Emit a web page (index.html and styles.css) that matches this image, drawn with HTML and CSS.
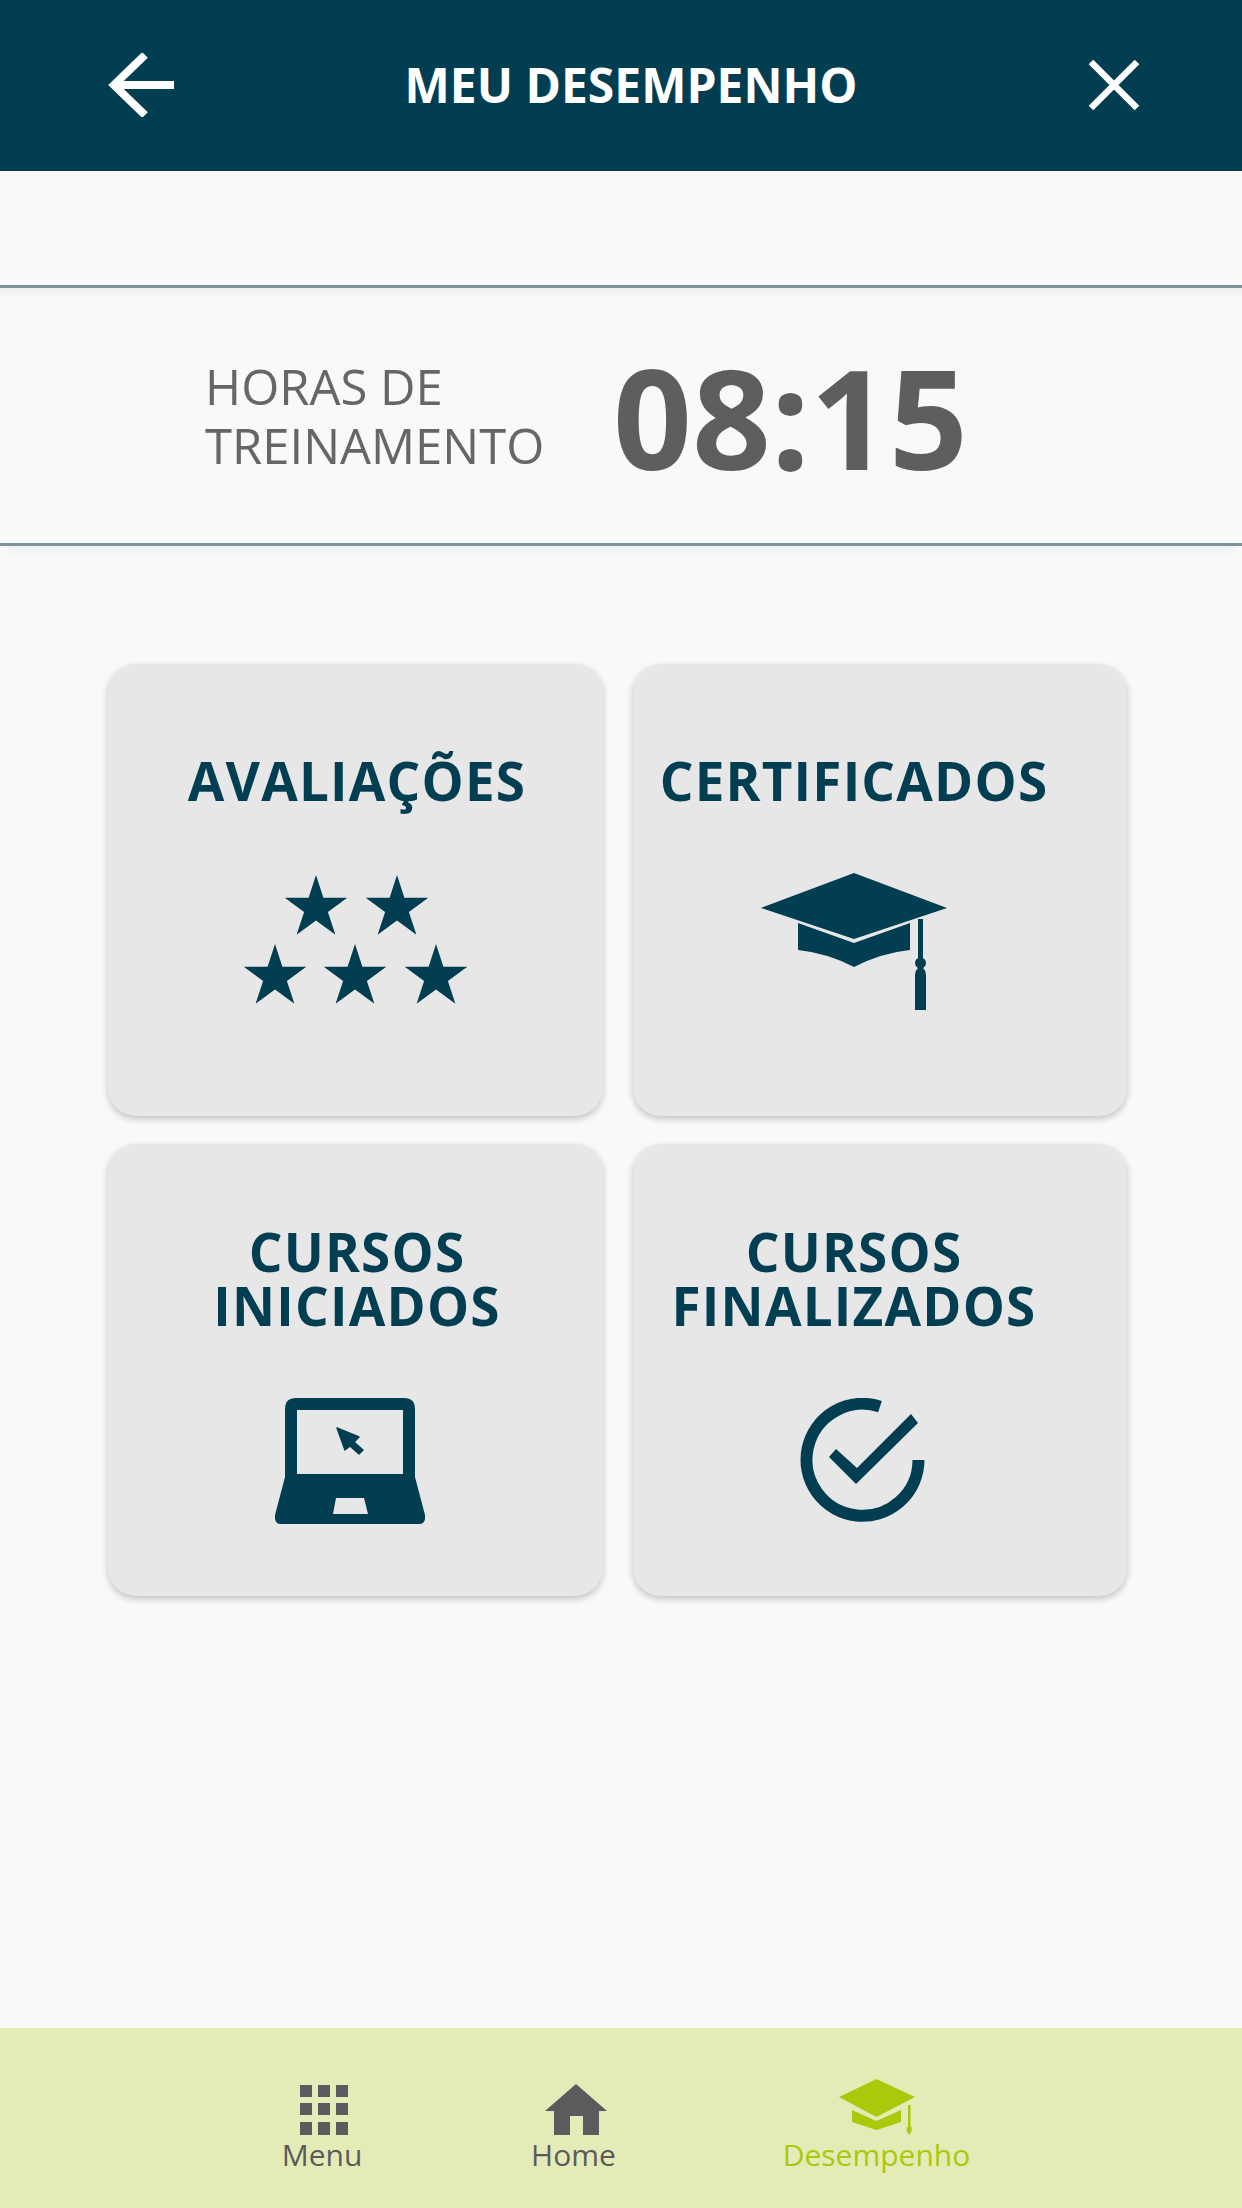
FILE: index.html
```html
<!DOCTYPE html>
<html lang="pt">
<head>
  <meta charset="UTF-8">
  <title>Meu Desempenho</title>
  <link rel="stylesheet" href="styles.css">
</head>

<body>
  <div class="app">

    <header class="top_bar">
      <svg class="back_icon" viewBox="0 0 66 64">
        <path d="M37 2 L6 32 L37 62" fill="none" stroke="#fff" stroke-width="8"/>
        <rect x="8" y="28" width="58" height="8" fill="#fff"/>
      </svg>
      <h1 class="top_title">MEU DESEMPENHO</h1>
      <svg class="close_icon" viewBox="0 0 52 52">
        <path d="M3 3 L49 49 M49 3 L3 49" fill="none" stroke="#fff" stroke-width="6.5"/>
      </svg>
    </header>

    <section class="hours">
      <div class="hours_label">HORAS DE<br>TREINAMENTO</div>
      <div class="hours_value">08:15</div>
    </section>

    <main class="cards">

      <div class="card card_left">
        <div class="card_title">AVALIAÇÕES</div>
        <svg class="stars_icon" viewBox="0 0 224 129">
          <defs>
            <polygon id="star" points="0,-33 7.4,-10.2 31.3,-10.2 11.9,3.9 19.4,26.7 0,12.6 -19.4,26.7 -11.9,3.9 -31.3,-10.2 -7.4,-10.2"/>
          </defs>
          <g fill="#023e52">
            <use href="#star" x="73" y="33"/>
            <use href="#star" x="154" y="33"/>
            <use href="#star" x="32" y="102"/>
            <use href="#star" x="112" y="102"/>
            <use href="#star" x="193" y="102"/>
          </g>
        </svg>
      </div>

      <div class="card card_right">
        <div class="card_title">CERTIFICADOS</div>
        <svg class="cap_icon" viewBox="0 0 186 137">
          <g fill="#023e52">
            <polygon points="93,0 186,35 93,66 0,35"/>
            <path d="M37 50 L93 70 L149 50 V77 Q120 80 93 94 Q66 80 37 77 Z"/>
            <rect x="157" y="46" width="5" height="44"/>
            <circle cx="159.5" cy="90" r="5.5"/>
            <path d="M154 137 V102 Q154 96 159.5 94 Q165 96 165 102 V137 Z"/>
          </g>
        </svg>
      </div>

      <div class="card card_left">
        <div class="card_title card_title_two">CURSOS<br>INICIADOS</div>
        <svg class="laptop_icon" viewBox="0 0 150 126">
          <g fill="#023e52">
            <path fill-rule="evenodd" d="M21 0 H129 Q140 0 140 11 V79 L150 117 Q151 126 144 126 H6 Q-1 126 0 117 L10 79 V11 Q10 0 21 0 Z M22 12 V76 H128 V12 Z M61 100 L58 116 H93 L89 100 Z"/>
            <polygon points="62,30 84,39 79,44 88,52 84,56 75,48 70,52" stroke="#023e52" stroke-width="1.5" stroke-linejoin="round"/>
          </g>
        </svg>
      </div>

      <div class="card card_right">
        <div class="card_title card_title_two">CURSOS<br>FINALIZADOS</div>
        <svg class="check_icon" viewBox="0 0 125 124">
          <path d="M80 8.6 A56 56 0 1 0 118.5 62" fill="none" stroke="#023e52" stroke-width="12"/>
          <polygon points="36,51 29,59 56,86 118,25 111,16 57,70" fill="#023e52"/>
        </svg>
      </div>

    </main>

    <nav class="bottom_bar">
      <div class="nav_item">
        <svg class="nav_icon nav_icon_grid" width="48" height="51" viewBox="0 0 48 51">
          <g fill="#5b5b5d">
            <rect x="0" y="1" width="12" height="12"/><rect x="18" y="1" width="12" height="12"/><rect x="36" y="1" width="12" height="12"/>
            <rect x="0" y="19" width="12" height="12"/><rect x="18" y="19" width="12" height="12"/><rect x="36" y="19" width="12" height="12"/>
            <rect x="0" y="38" width="12" height="13"/><rect x="18" y="38" width="12" height="13"/><rect x="36" y="38" width="12" height="13"/>
          </g>
        </svg>
        <span>Menu</span>
      </div>
      <div class="nav_item">
        <svg class="nav_icon nav_icon_home" width="62" height="51" viewBox="0 0 62 51">
          <path fill="#5b5b5d" d="M31 0 L62 27 H54 V51 H38 V32 H25 V51 H9 V27 H0 Z"/>
        </svg>
        <span>Home</span>
      </div>
      <div class="nav_item nav_item_active">
        <svg class="nav_icon" width="76" height="56" viewBox="0 0 76 56">
          <g fill="#a9c90a">
            <polygon points="37.5,0 76,18 37.5,38 0,18"/>
            <path d="M13 31 L37.5 42 L62 31 V43 L37.5 51 L13 43 Z"/>
            <rect x="69" y="26" width="2.5" height="24"/>
            <path d="M70.2 56 Q66.8 52 68 48 H72.5 Q73.6 52 70.2 56 Z"/>
          </g>
        </svg>
        <span>Desempenho</span>
      </div>
    </nav>

  </div>
</body>
</html>
```

FILE: styles.css
```css
html, body {
  padding: 0;
  margin: 0;
  height: 100%;
  overflow: hidden;
}
body {
  font-family: "Open Sans", "Liberation Sans", sans-serif;
  background: #f9f9f9;
}
.app {
  display: flex;
  flex-direction: column;
  height: 100%;
}

/* top bar */
.top_bar {
  display: flex;
  align-items: center;
  justify-content: space-between;
  flex: none;
  height: 171px;
  padding: 0 102px 0 108px;
  box-sizing: border-box;
  background: #023e52;
}
.back_icon {
  width: 66px;
  height: 64px;
  margin-top: -2px;
}
.close_icon {
  width: 52px;
  height: 52px;
  margin-top: -1px;
}
.top_title {
  margin: -1px 0 0;
  font-size: 48px;
  font-weight: 700;
  line-height: 60px;
  color: #fff;
}

/* hours */
.hours {
  display: flex;
  align-items: center;
  flex: none;
  height: 261px;
  margin-top: 114px;
  padding-left: 205px;
  box-sizing: border-box;
  border-top: 3px solid #7d9299;
  border-bottom: 3px solid #7d9299;
  box-shadow: inset 0 12px 10px -8px rgba(60,90,100,0.07), 0 12px 10px -8px rgba(60,90,100,0.07);
  color: #5e5e5e;
}
.hours_label {
  width: 408px;
  font-size: 49px;
  line-height: 59px;
  color: #666;
}
.hours_value {
  font-size: 138px;
  font-weight: 700;
  line-height: 160px;
}

/* cards */
.cards {
  display: grid;
  grid-template-columns: 495px 494px;
  grid-auto-rows: 452px;
  column-gap: 30px;
  row-gap: 28px;
  flex: 1;
  align-content: start;
  padding: 118px 0 0 108px;
}
.card {
  display: flex;
  flex-direction: column;
  align-items: center;
  background: #e7e7e8;
  border-radius: 28px;
  box-shadow: 0 3px 7px rgba(0,0,0,0.22);
}
.card_left {
  padding-left: 3px;
}
.card_right {
  padding-right: 52px;
}
.card_title {
  margin-top: 90px;
  font-size: 53px;
  font-weight: 700;
  line-height: 54px;
  letter-spacing: 1.2px;
  text-align: center;
  color: #023e52;
}
.card_title_two {
  margin-top: 81px;
}
.stars_icon {
  width: 224px;
  height: 129px;
  margin-top: 67px;
  margin-right: 5px;
}
.cap_icon {
  width: 186px;
  height: 137px;
  margin-top: 65px;
}
.laptop_icon {
  width: 150px;
  height: 126px;
  margin-top: 65px;
  margin-right: 14px;
}
.check_icon {
  width: 125px;
  height: 124px;
  margin-top: 65px;
  margin-left: 16px;
}

/* bottom bar */
.bottom_bar {
  display: grid;
  grid-template-columns: 200px 303px 303px;
  flex: none;
  height: 180px;
  padding-left: 222px;
  box-sizing: border-box;
  background: #e5ebb7;
}
.nav_item {
  display: flex;
  flex-direction: column;
  align-items: center;
  padding-top: 56px;
  font-size: 30px;
  line-height: 40px;
  color: #5b5b5d;
}
.nav_item_active {
  padding-top: 51px;
  color: #a9c90a;
}
.nav_icon {
  display: block;
}
.nav_icon_grid {
  margin-left: 3px;
}
.nav_icon_home {
  margin-left: 4px;
}
```
